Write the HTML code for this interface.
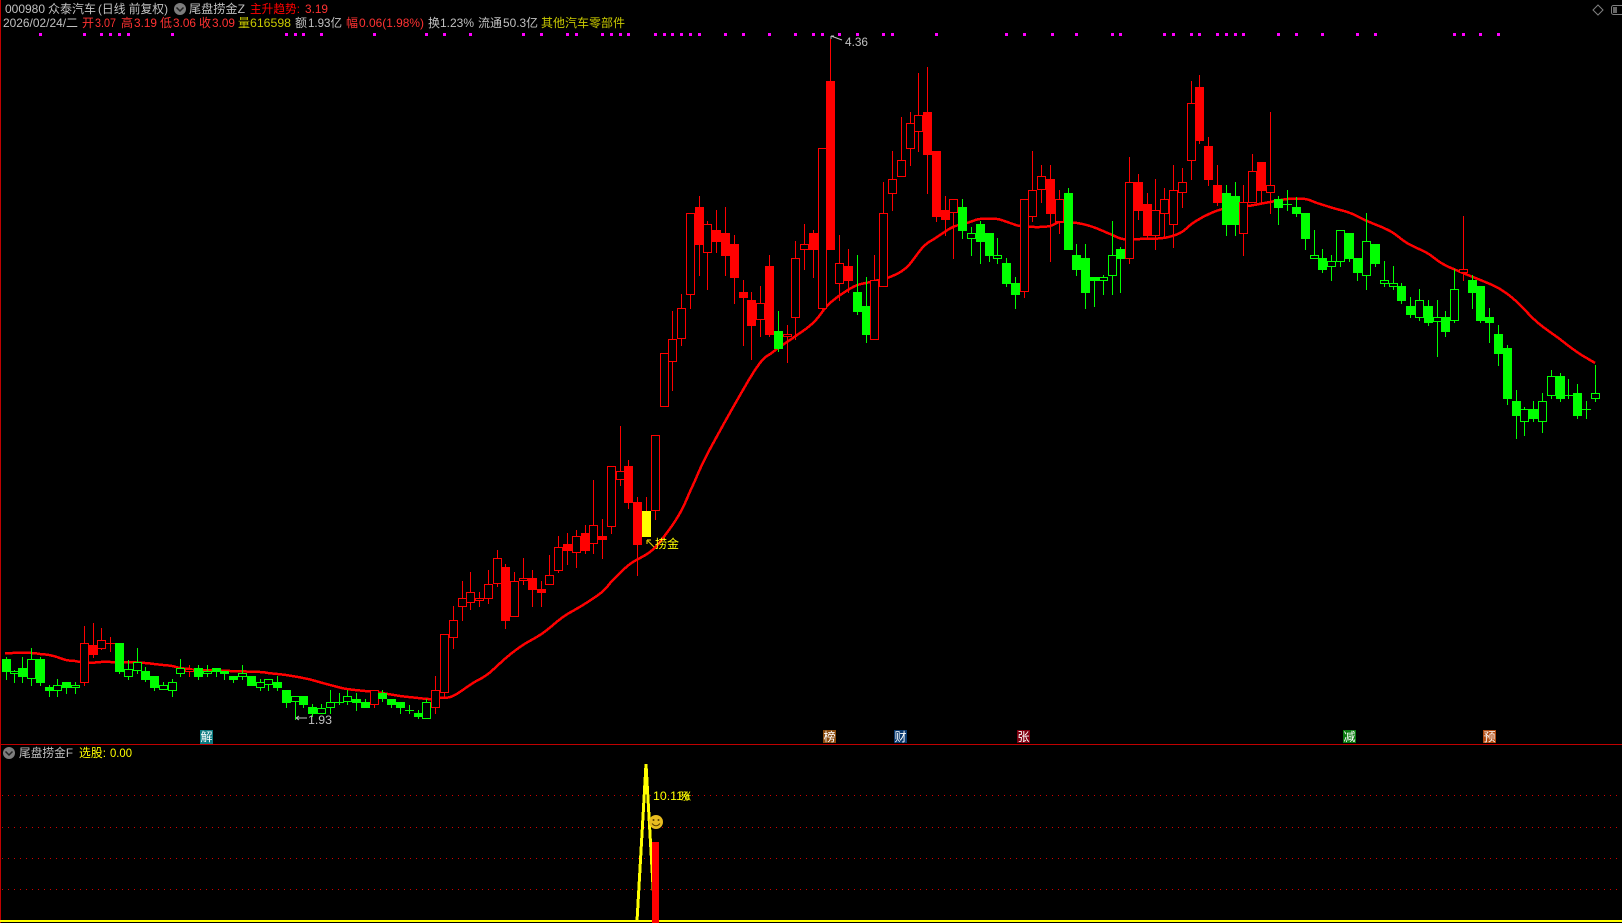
<!DOCTYPE html>
<html lang="zh">
<head>
<meta charset="utf-8">
<title>000980 众泰汽车</title>
<style>
html,body{margin:0;padding:0;background:#000;width:1622px;height:923px;overflow:hidden}
svg{position:absolute;left:0;top:0;display:block}
text{font-family:"Liberation Sans","WenQuanYi Zen Hei","Noto Sans CJK SC",sans-serif;font-size:12px}
.g{fill:#c0c0c0}.r{fill:#ff3232}.y{fill:#c8c800}.Y{fill:#ffff00}.w{fill:#fff}
</style>
</head>
<body>
<svg id="c" width="1622" height="923" viewBox="0 0 1622 923" xmlns="http://www.w3.org/2000/svg"></svg>
<svg width="1622" height="923" viewBox="0 0 1622 923" xmlns="http://www.w3.org/2000/svg">
<!-- header row 1 -->
<text class="g" x="5" y="13" textLength="40" lengthAdjust="spacingAndGlyphs">000980</text>
<text class="g" x="48" y="13" textLength="48" lengthAdjust="spacingAndGlyphs">众泰汽车</text>
<text class="g" x="98" y="13" textLength="70" lengthAdjust="spacingAndGlyphs">(日线 前复权)</text>
<circle cx="180" cy="9" r="6" fill="#7d7d7d"/>
<polyline points="176.5,7.5 180,11 183.5,7.5" fill="none" stroke="#222" stroke-width="1.5"/>
<text class="g" x="189" y="13" textLength="56" lengthAdjust="spacingAndGlyphs">尾盘捞金Z</text>
<text fill="#ff0000" x="250" y="13" textLength="50" lengthAdjust="spacingAndGlyphs">主升趋势:</text>
<text class="r" x="305" y="13" textLength="23" lengthAdjust="spacingAndGlyphs">3.19</text>
<!-- header row 2 -->
<text class="g" x="3" y="27" textLength="75" lengthAdjust="spacingAndGlyphs">2026/02/24/二</text>
<text class="r" x="82" y="27">开</text>
<text class="r" x="95" y="27" textLength="21" lengthAdjust="spacingAndGlyphs">3.07</text>
<text class="r" x="121" y="27">高</text>
<text class="r" x="134" y="27" textLength="23" lengthAdjust="spacingAndGlyphs">3.19</text>
<text class="r" x="160" y="27">低</text>
<text class="r" x="173" y="27" textLength="23" lengthAdjust="spacingAndGlyphs">3.06</text>
<text class="r" x="199" y="27">收</text>
<text class="r" x="212" y="27" textLength="23" lengthAdjust="spacingAndGlyphs">3.09</text>
<text class="y" x="238" y="27">量</text>
<text class="y" x="250" y="27" textLength="41" lengthAdjust="spacingAndGlyphs">616598</text>
<text class="g" x="295" y="27">额</text>
<text class="g" x="308" y="27" textLength="34" lengthAdjust="spacingAndGlyphs">1.93亿</text>
<text class="r" x="346" y="27">幅</text>
<text class="r" x="359" y="27" textLength="65" lengthAdjust="spacingAndGlyphs">0.06(1.98%)</text>
<text class="g" x="428" y="27">换</text>
<text class="g" x="440" y="27" textLength="34" lengthAdjust="spacingAndGlyphs">1.23%</text>
<text class="g" x="478" y="27" textLength="24" lengthAdjust="spacingAndGlyphs">流通</text>
<text class="g" x="503" y="27" textLength="35" lengthAdjust="spacingAndGlyphs">50.3亿</text>
<text class="y" x="541" y="27" textLength="84" lengthAdjust="spacingAndGlyphs">其他汽车零部件</text>
<!-- top right icons -->
<polygon points="1598,5 1603,10 1598,15 1593,10" fill="none" stroke="#808080" stroke-width="1"/>
<rect x="1611.5" y="5.5" width="12" height="9" rx="2" fill="#000" stroke="#808080"/>
<rect x="1613" y="7" width="4" height="6" fill="#666"/>
<!-- annotations -->
<path d="M831 36 L842 40 M831 36 h3 M831 36 v3" stroke="#c0c0c0" fill="none" stroke-width="1"/>
<text class="g" x="845" y="46" textLength="23" lengthAdjust="spacingAndGlyphs">4.36</text>
<path d="M296 718 H307 M296 718 l3 -2 M296 718 l3 2" stroke="#c0c0c0" fill="none" stroke-width="1"/>
<text class="g" x="308" y="724" textLength="24" lengthAdjust="spacingAndGlyphs">1.93</text>
<path d="M647 540 L654 547 M647 540 h4 M647 540 v4" stroke="#d8c000" fill="none" stroke-width="1.2"/>
<text class="Y" x="655" y="548" textLength="24" lengthAdjust="spacingAndGlyphs">捞金</text>
<!-- markers -->
<rect x="200" y="730" width="13" height="14" fill="#0a7a80"/><text class="w" x="200.5" y="741">解</text>
<rect x="823" y="730" width="13" height="13" fill="#8a4c10"/><text class="w" x="823.5" y="741">榜</text>
<rect x="894" y="730" width="13" height="13" fill="#0a3a70"/><text class="w" x="894.5" y="741">财</text>
<rect x="1017" y="730" width="13" height="13" fill="#800010"/><text class="w" x="1017.5" y="741">张</text>
<rect x="1343" y="730" width="13" height="13" fill="#0a7a10"/><text class="w" x="1343.5" y="741">减</text>
<rect x="1483" y="730" width="13" height="13" fill="#b04a10"/><text class="w" x="1483.5" y="741">预</text>
<!-- lower pane label -->
<circle cx="9" cy="753" r="6" fill="#7d7d7d"/>
<polyline points="5.5,751.5 9,755 12.5,751.5" fill="none" stroke="#222" stroke-width="1.5"/>
<text class="g" x="19" y="757" textLength="54" lengthAdjust="spacingAndGlyphs">尾盘捞金F</text>
<text class="Y" x="79" y="757" textLength="27" lengthAdjust="spacingAndGlyphs">选股:</text>
<text class="Y" x="110" y="757" textLength="22" lengthAdjust="spacingAndGlyphs">0.00</text>
<!-- lower pane chart overlay -->
<text class="Y" x="653" y="800" textLength="30" lengthAdjust="spacingAndGlyphs">10.11</text>
<text class="Y" x="679" y="800">%</text>
<text class="Y" x="681" y="800" style="font-size:10px">涨</text>
<circle cx="656" cy="822" r="7" fill="#e8bc20"/>
<circle cx="653.5" cy="820" r="1" fill="#5a4000"/><circle cx="658.5" cy="820" r="1" fill="#5a4000"/>
<path d="M652 823.5 Q656 828 660 823.5" fill="none" stroke="#5a4000" stroke-width="1"/>
</svg>
<script>
var D=[
[6,657,659,672,680,'g'],[14,670,671,674,683,'h'],[22,657,668,677,683,'g'],[31,648,659,679,686,'h'],[40,657,659,683,686,'g'],[49,685,687,691,697,'g'],[57,679,685,691,697,'h'],[66,682,682,688,694,'g'],[75,682,685,688,694,'h'],
[84,626,643,683,686,'r'],[93,623,645,655,658,'R'],[101,628,640,649,650,'r'],[110,637,643,643,652,'r'],[119,643,643,672,674,'g'],[128,660,669,677,680,'h'],[137,648,662,671,674,'h'],[145,667,671,680,682,'g'],[154,676,676,688,691,'g'],[163,682,685,690,690,'h'],[172,679,682,691,697,'h'],
[180,659,668,674,677,'h'],[189,665,669,672,677,'r'],[198,665,668,677,680,'g'],[207,665,671,674,677,'h'],[216,668,668,672,677,'g'],[224,671,671,674,680,'g'],[233,676,676,680,683,'g'],[242,665,673,677,680,'h'],[251,676,676,686,686,'g'],[260,679,682,688,691,'h'],
[268,679,679,685,691,'h'],[277,676,682,688,691,'g'],[286,690,690,703,708,'g'],[295,696,696,702,720,'h'],[303,696,696,705,708,'g'],[312,704,707,714,717,'g'],[321,704,708,714,714,'h'],[330,690,702,708,714,'h'],[339,693,702,702,705,'h'],[347,690,696,702,705,'h'],
[356,693,699,703,711,'g'],[365,699,702,708,708,'g'],[374,690,690,705,708,'r'],[382,690,693,699,702,'g'],[391,699,699,705,708,'g'],[400,702,702,708,714,'g'],[409,705,710,710,714,'h'],[418,710,713,717,719,'g'],[426,699,702,719,719,'h'],[435,676,690,708,714,'r'],
[444,634,634,693,698,'r'],[453,606,620,638,649,'r'],[462,581,598,607,621,'r'],[470,572,592,603,610,'r'],[479,592,598,601,607,'r'],[488,570,584,599,604,'r'],[497,550,558,584,587,'r'],[505,564,567,621,629,'R'],[514,572,581,617,617,'r'],[523,558,578,581,585,'r'],
[532,570,578,590,607,'R'],[541,581,589,593,607,'R'],[549,555,575,585,585,'r'],[558,536,547,571,573,'r'],[567,533,544,551,565,'R'],[576,530,536,553,568,'r'],[585,525,533,551,554,'R'],[593,480,525,544,554,'r'],[602,519,536,540,559,'R'],[611,466,466,527,534,'r'],
[620,426,471,480,486,'r'],[628,460,466,503,509,'R'],[637,497,502,545,576,'R'],[646,497,511,537,537,'Y'],[655,435,435,511,520,'r'],[664,353,353,407,407,'r'],[672,311,339,362,391,'r'],[681,294,308,339,346,'r'],[690,213,213,295,309,'r'],[699,196,207,245,276,'R'],
[707,221,224,253,290,'r'],[716,210,230,242,253,'R'],[725,207,233,256,276,'R'],[734,235,244,278,304,'R'],[743,280,292,298,346,'R'],[751,292,300,326,360,'R'],[760,286,303,320,337,'r'],[769,255,266,335,337,'R'],[778,311,331,349,352,'g'],[787,325,334,337,363,'r'],
[795,241,258,318,340,'r'],[804,224,244,250,270,'r'],[813,230,233,250,278,'R'],[822,148,148,309,313,'r'],[830,39,81,250,250,'R'],[839,235,263,284,301,'r'],[848,249,266,281,293,'R'],[857,255,292,312,315,'g'],[866,277,306,335,343,'g'],[874,255,280,340,340,'r'],
[883,182,213,287,287,'r'],[892,151,179,194,211,'r'],[901,117,160,177,177,'r'],[910,112,123,149,166,'r'],[918,73,115,132,152,'r'],[927,67,112,155,194,'R'],[936,151,151,217,222,'R'],[945,196,210,220,236,'R'],[953,199,199,213,259,'r'],[962,199,207,231,239,'g'],
[971,227,233,239,256,'h'],[980,221,224,242,264,'g'],[989,233,233,256,262,'g'],[997,238,255,259,264,'h'],[1006,258,263,284,287,'g'],[1015,277,283,295,309,'g'],[1024,199,199,292,298,'r'],[1032,151,190,217,222,'r'],[1041,165,176,190,203,'r'],[1050,165,179,214,262,'R'],
[1059,190,199,222,234,'r'],[1068,188,193,250,250,'g'],[1076,244,255,270,276,'g'],[1085,244,258,293,309,'g'],[1094,277,277,281,307,'g'],[1103,275,277,281,295,'h'],[1112,221,255,276,295,'h'],[1120,247,249,259,293,'g'],[1129,157,182,259,264,'r'],[1138,174,182,211,220,'R'],
[1147,193,204,236,239,'R'],[1155,179,210,236,250,'r'],[1164,188,199,214,239,'r'],[1173,165,190,225,248,'r'],[1182,168,182,193,208,'r'],[1191,81,103,161,180,'r'],[1199,75,87,141,144,'R'],[1208,137,146,180,186,'R'],[1217,165,185,203,206,'R'],[1226,185,193,225,236,'g'],
[1235,182,196,225,236,'g'],[1243,185,202,234,256,'r'],[1252,154,171,203,203,'r'],[1261,162,162,191,205,'R'],[1270,112,185,193,214,'r'],[1278,196,199,208,225,'g'],[1287,190,204,204,211,'h'],[1296,197,207,214,217,'g'],[1305,213,213,239,250,'g'],[1314,230,255,259,259,'h'],
[1322,249,258,270,273,'g'],[1331,255,261,267,281,'h'],[1340,230,230,262,267,'h'],[1349,233,233,259,262,'g'],[1357,258,258,273,281,'g'],[1366,213,241,276,290,'h'],[1375,244,244,264,267,'g'],[1384,261,280,284,287,'h'],[1393,266,283,287,290,'h'],[1401,283,286,301,304,'g'],
[1410,297,306,315,318,'g'],[1419,289,300,318,321,'h'],[1428,300,306,323,326,'g'],[1437,300,317,322,357,'h'],[1445,311,317,332,337,'g'],[1454,269,289,321,323,'h'],[1463,216,269,273,281,'r'],[1472,275,280,293,309,'g'],[1480,286,286,321,323,'g'],[1489,308,317,323,343,'g'],
[1498,325,334,354,366,'g'],[1507,345,348,399,405,'g'],[1516,390,401,416,439,'g'],[1524,407,409,422,436,'h'],[1533,401,409,419,422,'g'],[1542,393,401,422,433,'h'],[1551,370,376,396,399,'h'],[1560,373,376,399,402,'g'],[1568,379,395,395,399,'h'],[1577,384,393,416,419,'g'],
[1586,401,409,409,419,'h'],[1595,365,393,399,402,'h']];
var MA="5,653 31,653 40,654 49,655 57,657 66,660 75,661 80,662 89,663 101,662 115,662 124,662 145,663 154,664 163,665 172,666 180,668 189,669 198,670 230,671 260,672 268,673 286,675 303,678 312,680 330,685 347,689 365,691 382,693 400,696 418,698 430,699 440,698 453,696 473,683 488,674 507,657 523,645 543,633 563,617 583,605 602,592 613,580 630,564 650,552 663,538 680,513 693,485 710,449 755,370 773,352 790,340 813,323 830,303 853,287 870,282 890,277 907,267 923,247 937,237 953,227 967,223 980,219 997,219 1010,223 1020,226 1037,227 1050,226 1060,222 1077,223 1093,227 1110,234 1123,239 1140,239 1163,238 1180,233 1193,223 1207,215 1223,209 1248,206 1270,202 1288,199 1305,199 1317,203 1333,208 1350,213 1367,221 1390,231 1407,243 1427,253 1443,264 1463,273 1490,284 1503,291 1517,302 1537,322 1557,337 1577,352 1595,363";
var DOTS=[40,84,101,110,119,128,172,286,295,303,321,374,426,444,470,523,541,567,576,602,611,620,628,655,664,672,681,690,699,725,743,769,795,813,822,839,857,883,892,936,1006,1024,1052,1076,1112,1120,1164,1173,1191,1199,1217,1226,1235,1243,1278,1296,1322,1357,1375,1454,1463,1480,1498];
// smooth the moving-average line with Catmull-Rom sampling
var P=MA.split(' ').map(function(p){return p.split(',').map(Number);});
var Q=[];
for(var i=0;i<P.length-1;i++){
 var a=P[Math.max(i-1,0)],b=P[i],c=P[i+1],d=P[Math.min(i+2,P.length-1)];
 for(var j=0;j<6;j++){
  var t=j/6,t2=t*t,t3=t2*t;
  var fx=.5*(2*b[0]+(c[0]-a[0])*t+(2*a[0]-5*b[0]+4*c[0]-d[0])*t2+(3*b[0]-a[0]-3*c[0]+d[0])*t3);
  var fy=.5*(2*b[1]+(c[1]-a[1])*t+(2*a[1]-5*b[1]+4*c[1]-d[1])*t2+(3*b[1]-a[1]-3*c[1]+d[1])*t3);
  Q.push(fx.toFixed(1)+','+fy.toFixed(1));
 }
}
Q.push(P[P.length-1].join(','));
var s='<rect width="1622" height="923" fill="#000"/>';
s+='<g shape-rendering="crispEdges">';
s+='<rect x="0" y="0" width="1" height="923" fill="#c00000"/><rect x="0" y="744" width="1622" height="1" fill="#c00000"/>';
[795,827,858,889].forEach(function(y){s+='<line x1="2" x2="1622" y1="'+(y+.5)+'" y2="'+(y+.5)+'" stroke="#d00000" stroke-dasharray="1 5"/>';});
DOTS.forEach(function(x){s+='<rect x="'+(x-1)+'" y="33" width="3" height="3" fill="#ff00ff"/>';});
s+='<polyline points="'+Q.join(' ')+'" fill="none" stroke="#ff0000" stroke-width="2.5"/>';
D.forEach(function(c){
 var x=c[0],h=c[1],t=c[2],b=c[3],l=c[4],k=c[5];
 var col=(k=='g'||k=='h')?'#00ff00':(k=='Y'?'#ffff00':'#ff0000');
 var wc=(k=='Y')?'#ff0000':col;
 s+='<rect x="'+x+'" y="'+h+'" width="1" height="'+(l-h)+'" fill="'+wc+'"/>';
 if(t==b){s+='<rect x="'+(x-4)+'" y="'+t+'" width="9" height="1" fill="'+col+'"/>';}
 else if(k=='r'||k=='h'){s+='<rect x="'+(x-3.5)+'" y="'+(t+.5)+'" width="8" height="'+(b-t-1)+'" fill="#000" stroke="'+col+'" stroke-width="1"/>';}
 else{s+='<rect x="'+(x-4)+'" y="'+t+'" width="9" height="'+(b-t)+'" fill="'+col+'"/>';}
});
s+='<rect x="0" y="920" width="1622" height="2" fill="#ffff00"/>';
s+='<path d="M637 921 L646 764 L655 921" fill="none" stroke="#ffff00" stroke-width="3"/>';
s+='<rect x="652" y="842" width="7" height="81" fill="#ff0000"/>';
s+='</g>';
document.getElementById('c').innerHTML=s;
</script>
</body>
</html>
